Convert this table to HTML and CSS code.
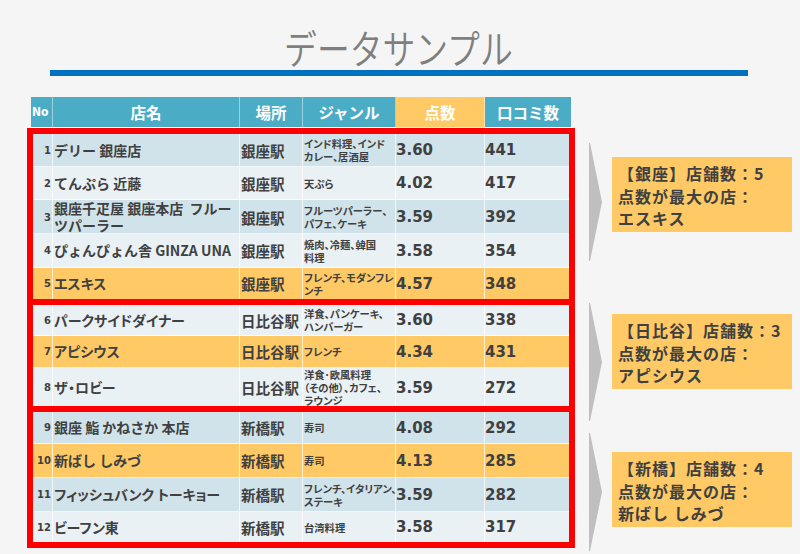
FILE: index.html
```html
<!DOCTYPE html>
<html lang="ja">
<head>
<meta charset="utf-8">
<title>データサンプル</title>
<link rel="stylesheet" href="styles.css">
</head>
<body>
<div class="page">
  <div class="title"><span class="title-text">データサンプル</span></div>
  <div class="bar"></div>
  <div class="content">
    <div class="table">
      <div class="thead">
        <div class="th th-no">No</div>
        <div class="th">店名</div>
        <div class="th">場所</div>
        <div class="th">ジャンル</div>
        <div class="th th-score">点数</div>
        <div class="th">口コミ数</div>
      </div>

      <div class="group">
        <div class="row dark h33">
          <div class="no">1</div><div class="name">デリー 銀座店</div><div class="st">銀座駅</div>
          <div class="genre">インド料理、インド<br>カレー、居酒屋</div><div class="num">3.60</div><div class="num">441</div>
        </div>
        <div class="row light h33">
          <div class="no">2</div><div class="name">てんぷら 近藤</div><div class="st">銀座駅</div>
          <div class="genre">天ぷら</div><div class="num">4.02</div><div class="num">417</div>
        </div>
        <div class="row dark h34">
          <div class="no">3</div><div class="name">銀座千疋屋 銀座本店&nbsp; フルー<br>ツパーラー</div><div class="st">銀座駅</div>
          <div class="genre">フルーツパーラー、<br>パフェ、ケーキ</div><div class="num">3.59</div><div class="num">392</div>
        </div>
        <div class="row light h34">
          <div class="no">4</div><div class="name">ぴょんぴょん舎 GINZA UNA</div><div class="st">銀座駅</div>
          <div class="genre">焼肉、冷麺、韓国<br>料理</div><div class="num">3.58</div><div class="num">354</div>
        </div>
        <div class="row orange h31">
          <div class="no">5</div><div class="name kana">エスキス</div><div class="st">銀座駅</div>
          <div class="genre">フレンチ、モダンフレ<br>ンチ</div><div class="num">4.57</div><div class="num">348</div>
        </div>
      </div>

      <div class="group overlap">
        <div class="row light h31">
          <div class="no">6</div><div class="name kana">パークサイドダイナー</div><div class="st">日比谷駅</div>
          <div class="genre">洋食、パンケーキ、<br>ハンバーガー</div><div class="num">3.60</div><div class="num">338</div>
        </div>
        <div class="row orange h32">
          <div class="no">7</div><div class="name kana">アピシウス</div><div class="st">日比谷駅</div>
          <div class="genre">フレンチ</div><div class="num">4.34</div><div class="num">431</div>
        </div>
        <div class="row light h38">
          <div class="no">8</div><div class="name kana">ザ・ロビー</div><div class="st">日比谷駅</div>
          <div class="genre clip">洋食･欧風料理<br>（その他）、カフェ、<br>ラウンジ</div><div class="num">3.59</div><div class="num">272</div>
        </div>
      </div>

      <div class="group overlap">
        <div class="row dark h32">
          <div class="no">9</div><div class="name">銀座 鮨 かねさか 本店</div><div class="st">新橋駅</div>
          <div class="genre">寿司</div><div class="num">4.08</div><div class="num">292</div>
        </div>
        <div class="row orange h34">
          <div class="no">10</div><div class="name">新ばし しみづ</div><div class="st">新橋駅</div>
          <div class="genre">寿司</div><div class="num">4.13</div><div class="num">285</div>
        </div>
        <div class="row dark h34">
          <div class="no">11</div><div class="name kana">フィッシュバンク トーキョー</div><div class="st">新橋駅</div>
          <div class="genre">フレンチ、イタリアン、<br>ステーキ</div><div class="num">3.59</div><div class="num">282</div>
        </div>
        <div class="row light h30">
          <div class="no">12</div><div class="name kana">ビーフン東</div><div class="st">新橋駅</div>
          <div class="genre">台湾料理</div><div class="num">3.58</div><div class="num">317</div>
        </div>
      </div>
    </div>

    <div class="side">
      <div class="callout c1">
        <svg class="chev" width="13" height="118" viewBox="0 0 13 118"><polygon points="0,0 1,0 13,59 1,118 0,118" fill="#bfbfbf"/></svg>
        <div class="box">【銀座】店舗数：5<br>点数が最大の店：<br>エスキス</div>
      </div>
      <div class="callout c2">
        <svg class="chev" width="13" height="118" viewBox="0 0 13 118"><polygon points="0,0 1,0 13,59 1,118 0,118" fill="#bfbfbf"/></svg>
        <div class="box">【日比谷】店舗数：3<br>点数が最大の店：<br>アピシウス</div>
      </div>
      <div class="callout c3">
        <svg class="chev" width="13" height="118" viewBox="0 0 13 118"><polygon points="0,0 1,0 13,59 1,118 0,118" fill="#bfbfbf"/></svg>
        <div class="box">【新橋】店舗数：4<br>点数が最大の店：<br>新ばし しみづ</div>
      </div>
    </div>
  </div>
</div>
</body>
</html>
```

FILE: styles.css
```css
* { box-sizing: border-box; }
html, body { margin: 0; padding: 0; }
body {
  background: #f5f5f5;
  font-family: "Noto Sans CJK JP", "Noto Sans", sans-serif;
  color: #404040;
  width: 800px;
  height: 554px;
  overflow: hidden;
}
.page { width: 800px; height: 554px; }

.title {
  height: 70px;
  display: flex;
  justify-content: center;
  align-items: flex-end;
}
.title-text {
  display: inline-block;
  font-size: 40px;
  line-height: 46px;
  font-weight: 350;
  color: #7f7f7f;
  transform: scaleX(0.82);
  margin-left: -4px;
}
.bar {
  height: 6px;
  margin: 0 52px 0 50px;
  background: #0070c0;
}

.content {
  display: flex;
  margin-top: 21px;
}

.table {
  margin-left: 27px;
  width: 548px;
}
.thead {
  margin: 0 4px;
  height: 30px;
  display: grid;
  grid-template-columns: 22px 187px 63px 93px 89px 86px;
  background: #4bacc6;
}
.th {
  display: flex;
  align-items: center;
  justify-content: center;
  color: #fff;
  font-weight: bold;
  font-size: 15.5px;
  border-right: 1px solid rgba(255, 255, 255, 0.45);
}
.th:last-child { border-right: 0; }
.th-no { font-size: 12px; font-family: "DejaVu Sans Condensed", "DejaVu Sans", sans-serif; justify-content: flex-start; padding-left: 1px; }
.th-score { background: #ffc965; }

.group {
  border: 6px solid #ff0000;
  margin-top: 1px;
  position: relative;
}
.group.overlap { margin-top: -6px; }

.row {
  display: grid;
  grid-template-columns: 20px 187px 63px 93px 89px 84px;
  border-bottom: 1px solid rgba(255, 255, 255, 0.7);
}
.row:last-child { border-bottom: 0; }
.row > div {
  display: flex;
  align-items: center;
  border-right: 1px solid rgba(255, 255, 255, 0.7);
  min-width: 0;
}
.row > div:last-child { border-right: 0; }
.dark { background: #d1e3ea; }
.light { background: #e9f1f5; }
.orange { background: #ffc965; }

.h30 { height: 30px; }
.h31 { height: 31px; }
.h32 { height: 32px; }
.h33 { height: 33px; }
.h34 { height: 34px; }
.h38 { height: 38px; }

.no {
  justify-content: flex-end;
  padding-right: 1px;
  font-family: "DejaVu Sans", sans-serif;
  font-weight: bold;
  font-size: 10px;
}
.name {
  font-size: 14px;
  font-weight: bold;
  line-height: 17px;
  white-space: nowrap;
  padding-left: 1px;
}
.name.kana { font-feature-settings: "palt"; }
.st {
  font-size: 14.5px;
  font-weight: bold;
  white-space: nowrap;
  padding-left: 1px;
}
.genre {
  font-size: 10.3px;
  font-weight: bold;
  line-height: 13px;
  white-space: nowrap;
  padding-left: 1px;
  font-feature-settings: "palt";
}
.genre.clip { clip-path: inset(0 -40px 0 0); }
.num {
  font-family: "DejaVu Sans", sans-serif;
  font-weight: bold;
  font-size: 15px;
  padding-left: 0;
}

.side {
  margin-left: 14px;
  display: flex;
  flex-direction: column;
}
.callout {
  display: flex;
  align-items: flex-start;
}
.chev { display: block; flex: none; }
.box {
  margin-left: 10px;
  width: 180px;
  height: 75px;
  background: #ffc965;
  font-size: 16px;
  font-weight: bold;
  line-height: 22.5px;
  letter-spacing: 1px;
  padding: 5px 0 0 6px;
  white-space: nowrap;
}
.c1 { margin-top: 46px; }
.c1 .box { margin-top: 14px; }
.c2 { margin-top: 42px; }
.c2 .box { margin-top: 11px; }
.c3 { margin-top: 12px; }
.c3 .box { margin-top: 19px; }
```
